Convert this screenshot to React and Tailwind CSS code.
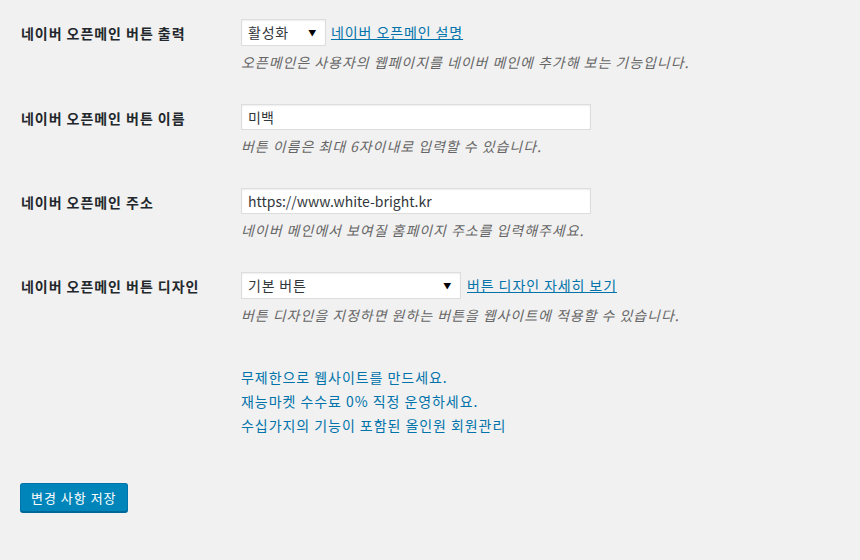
const font = { fontFamily: '"Noto Sans CJK KR", "Noto Sans", sans-serif' };

function Row({ label, children }) {
  return (
    <div className="flex">
      <div className="w-[210px] shrink-0 pt-[19px] pl-[21px] text-[14px] font-bold leading-[28px] tracking-[0.95px] text-[#23282d]">
        {label}
      </div>
      <div className="flex-1 pt-[19px] pb-[13px] pl-[31px]">{children}</div>
    </div>
  );
}

function Select({ value, width }) {
  return (
    <div
      className={`flex h-[27px] items-center justify-between border border-[#ddd] bg-white pl-[6px] pr-[8px] text-[14px] tracking-[0.8px] text-[#32373c] shadow-[inset_0_1px_2px_rgba(0,0,0,0.07)] ${width}`}
    >
      <span>{value}</span>
      <span className="text-[8px] text-black">▼</span>
    </div>
  );
}

function Desc({ children }) {
  return <p className="mt-[6px] text-[14px] italic leading-[20px] tracking-[0.95px] text-[#666]">{children}</p>;
}

function TextInput({ value }) {
  return (
    <input
      readOnly
      value={value}
      className="h-[26px] w-[350px] border border-[#ddd] bg-white px-[6px] text-[14px] text-[#32373c] shadow-[inset_0_1px_2px_rgba(0,0,0,0.07)] outline-none"
      style={font}
    />
  );
}

export default function App() {
  return (
    <div className="min-h-[560px] w-[860px] bg-[#f1f1f1]" style={font}>
      <Row label="네이버 오픈메인 버튼 출력">
        <div className="flex items-center">
          <Select value="활성화" width="w-[85px]" />
          <a className="ml-[5px] text-[14px] tracking-[0.9px] text-[#0073aa] underline">네이버 오픈메인 설명</a>
        </div>
        <Desc>오픈메인은 사용자의 웹페이지를 네이버 메인에 추가해 보는 기능입니다.</Desc>
      </Row>
      <Row label="네이버 오픈메인 버튼 이름">
        <TextInput value="미백" />
        <Desc>버튼 이름은 최대 6자이내로 입력할 수 있습니다.</Desc>
      </Row>
      <Row label="네이버 오픈메인 주소">
        <TextInput value="https://www.white-bright.kr" />
        <Desc>네이버 메인에서 보여질 홈페이지 주소를 입력해주세요.</Desc>
      </Row>
      <Row label="네이버 오픈메인 버튼 디자인">
        <div className="flex items-center">
          <Select value="기본 버튼" width="w-[220px]" />
          <a className="ml-[6px] text-[14px] tracking-[0.9px] text-[#0073aa] underline">버튼 디자인 자세히 보기</a>
        </div>
        <Desc>버튼 디자인을 지정하면 원하는 버튼을 웹사이트에 적용할 수 있습니다.</Desc>
      </Row>
      <div className="flex flex-col pl-[241px] pt-[27px] text-[14px] leading-[24px] tracking-[0.95px] text-[#0073aa]">
        <a>무제한으로 웹사이트를 만드세요.</a>
        <a>재능마켓 수수료 0% 직정 운영하세요.</a>
        <a>수십가지의 기능이 포함된 올인원 회원관리</a>
      </div>
      <div className="pl-[20px] pt-[46px]">
        <button
          className="h-[29px] rounded-[3px] border border-[#0073aa] border-b-[#006799] bg-[#0085ba] px-[10px] text-[13px] tracking-[1px] text-white shadow-[0_1px_0_#006799]"
          style={font}
        >
          변경 사항 저장
        </button>
      </div>
    </div>
  );
}
